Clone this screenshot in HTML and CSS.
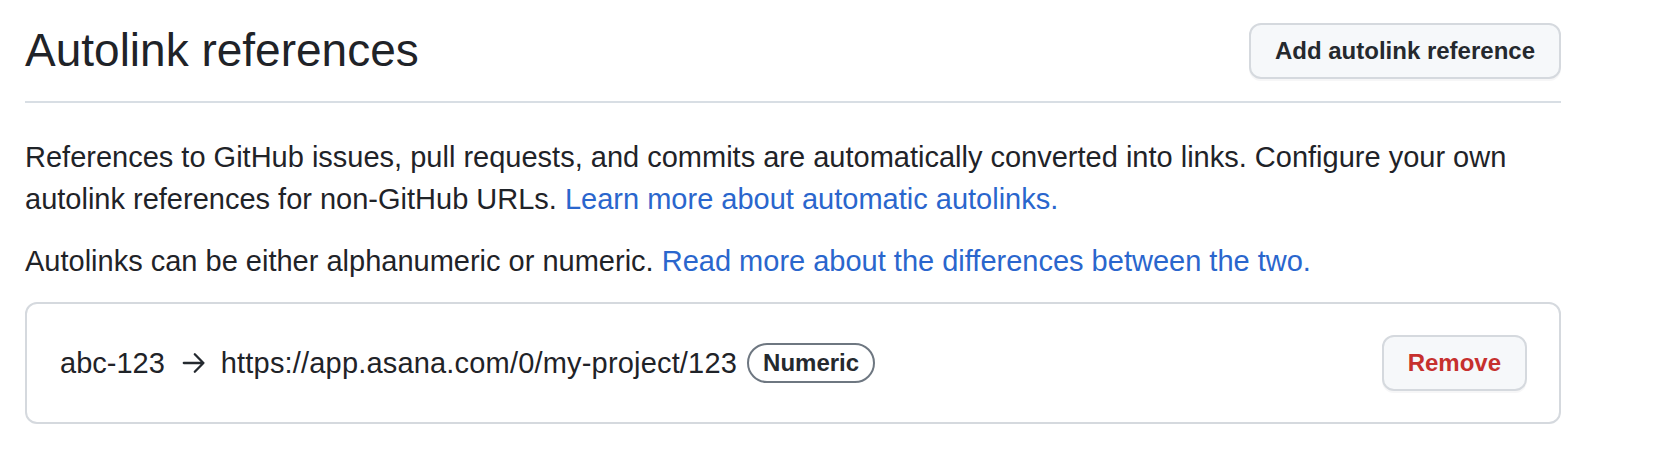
FILE: index.html
```html
<!DOCTYPE html>
<html lang="en">
<head>
<meta charset="utf-8">
<title>Autolink references</title>
<link rel="stylesheet" href="styles.css">
</head>
<body>
<main class="page">
  <div class="subhead">
    <h2 class="subhead-heading">Autolink references</h2>
    <button class="btn" type="button">Add autolink reference</button>
  </div>
  <p class="note">References to GitHub issues, pull requests, and commits are automatically converted into links. Configure your own autolink references for non-GitHub URLs. <a href="#" class="link">Learn more about automatic autolinks.</a></p>
  <p class="note">Autolinks can be either alphanumeric or numeric. <a href="#" class="link">Read more about the differences between the two.</a></p>
  <div class="box">
    <div class="row-main">
      <span class="prefix">abc-123</span>
      <svg class="arrow" viewBox="0 0 16 16" width="32" height="32" aria-hidden="true"><path fill="none" stroke="currentColor" stroke-width="1.15" stroke-linecap="round" stroke-linejoin="round" d="M3.4 8h9.8M8.9 3.6 13.2 8l-4.3 4.4"/></svg>
      <span class="url">https://app.asana.com/0/my-project/123</span>
      <span class="label">Numeric</span>
    </div>
    <button class="btn btn-danger" type="button">Remove</button>
  </div>
</main>
</body>
</html>
```

FILE: styles.css
```css
html, body {
  margin: 0;
  padding: 0;
  background: #ffffff;
}

body {
  font-family: "Liberation Sans", Arial, sans-serif;
  color: #1f2328;
}

.page {
  width: 1536px;
  margin-left: 25px;
}

.subhead {
  display: flex;
  align-items: center;
  justify-content: space-between;
  padding-top: 16px;
  padding-bottom: 16px;
  border-bottom: 2px solid #d8dee4;
  margin-bottom: 33px;
}

.subhead-heading {
  margin: 0;
  font-size: 46px;
  font-weight: 400;
  line-height: 69px;
  color: #1f2328;
}

.btn {
  font-family: "Liberation Sans", Arial, sans-serif;
  font-size: 24px;
  font-weight: 700;
  height: 56px;
  padding: 0 24px;
  border: 2px solid #d5d9de;
  border-radius: 12px;
  background: #f6f8fa;
  color: #25292e;
  box-shadow: 0 2px 0 rgba(31, 35, 40, 0.04);
  white-space: nowrap;
}

.btn-danger {
  color: #c6302e;
}

.note {
  margin: 0 0 20px 0;
  font-size: 29px;
  line-height: 42px;
}

.link {
  color: #2a66cd;
  text-decoration: none;
}

.box {
  display: flex;
  align-items: center;
  justify-content: space-between;
  border: 2px solid #d5d9de;
  border-radius: 12px;
  padding: 31px 32px;
}

.row-main {
  display: flex;
  align-items: center;
  font-size: 29px;
  line-height: 42px;
}

.prefix {
  margin-left: 1px;
}

.arrow {
  display: block;
  margin: 0 12px;
  color: #24292f;
}

.url {
  letter-spacing: 0.18px;
}

.label {
  display: inline-flex;
  align-items: center;
  height: 40px;
  box-sizing: border-box;
  margin-left: 10px;
  padding: 0 14px;
  border: 2px solid #6e7781;
  border-radius: 40px;
  font-size: 24px;
  font-weight: 700;
  line-height: 1;
  color: #25292e;
}
```
